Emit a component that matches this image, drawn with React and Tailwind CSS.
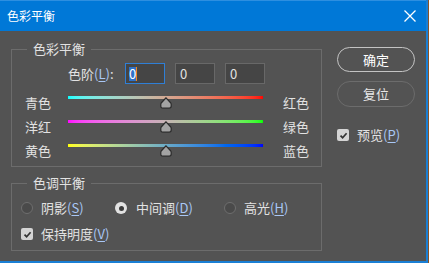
import React from "react";

const font = { fontFamily: '"Noto Sans CJK SC", "Noto Sans", sans-serif' };

function Key({ k }) {
  return (
    <span className="text-[#a9c7f5]">
      (<span className="underline underline-offset-2">{k}</span>)
    </span>
  );
}

function Slider({ left, right, from, to }) {
  return (
    <div className="flex items-center h-[24px]">
      <div className="w-[43px] pl-[13px] box-content">{left}</div>
      <div className="relative w-[195px] h-[13px] -mt-[2px]">
        <div className={`h-[3px] w-full bg-gradient-to-r ${from} ${to}`}></div>
        <svg className="absolute left-[92px] top-[1px]" width="12" height="12" viewBox="0 0 12 12">
          <path d="M6 0.8 L10.8 6 Q11.2 6.5 11.2 7.5 L11.2 9 Q11.2 11.2 9 11.2 L3 11.2 Q0.8 11.2 0.8 9 L0.8 7.5 Q0.8 6.5 1.2 6 Z" fill="#a3a3a3" stroke="#2b2b2b" strokeWidth="1.2" />
        </svg>
      </div>
      <div className="ml-[20px]">{right}</div>
    </div>
  );
}

function Radio({ checked }) {
  return checked ? (
    <span className="w-[12px] h-[12px] rounded-full bg-[#e2e2e2] flex items-center justify-center shrink-0">
      <span className="w-[5px] h-[5px] rounded-full bg-[#3a3a3a]"></span>
    </span>
  ) : (
    <span className="w-[12px] h-[12px] rounded-full bg-[#4a4a4a] border border-[#6e6e6e] shrink-0"></span>
  );
}

function Check() {
  return (
    <span className="w-[12px] h-[12px] rounded-[2px] bg-[#d4d4d4] flex items-center justify-center shrink-0">
      <svg width="9" height="9" viewBox="0 0 9 9">
        <path d="M1.5 4.6 L3.6 6.7 L7.6 2.2" fill="none" stroke="#333" strokeWidth="1.7" />
      </svg>
    </span>
  );
}

export default function App() {
  return (
    <div className="w-[429px] h-[263px] bg-[#8a5326] overflow-hidden" style={font}>
      <div className="w-[428px] h-[263px] bg-[#535353] border-r-2 border-b-2 border-[#1a7fd4] text-[13px] text-[#e2e2e2] leading-[18px]">
        <div className="h-[31px] bg-[#0078d7] border-t border-[#2d8fe0] flex items-center justify-between pl-[7px] pr-[10px]">
          <span className="text-[12px] text-white">色彩平衡</span>
          <svg width="12" height="12" viewBox="0 0 12 12">
            <path d="M0.5 0.5 L11.5 11.5 M11.5 0.5 L0.5 11.5" stroke="white" strokeWidth="1.3" />
          </svg>
        </div>

        <div className="flex items-start">
          <div className="pl-[11px] pt-[9px] w-[322px] shrink-0">
            <fieldset className="border border-[#6c6c6c] w-[311px] pb-[3px]">
              <legend className="ml-[15px] px-[6px]">色彩平衡</legend>
              <div className="flex items-center mt-[5px] pl-[56px]">
                <div className="w-[57px] shrink-0">
                  色阶<Key k="L" />:
                </div>
                <div className="w-[40px] h-[21px] bg-[#454545] border border-[#2f7fd6] flex items-center pl-[3px]">
                  <span className="bg-[#2f72c9] text-white leading-[14px]">0</span>
                  <span className="w-[1px] h-[14px] bg-[#f08a24]"></span>
                </div>
                <div className="w-[40px] h-[21px] bg-[#454545] border border-[#686868] flex items-center pl-[4px] ml-[10px]">0</div>
                <div className="w-[40px] h-[21px] bg-[#454545] border border-[#686868] flex items-center pl-[4px] ml-[10px]">0</div>
              </div>
              <div className="mt-[7px]">
                <Slider left="青色" right="红色" from="from-[#00ffff]" to="to-[#ff0000]" />
                <Slider left="洋红" right="绿色" from="from-[#ff00ff]" to="to-[#00ff00]" />
                <Slider left="黄色" right="蓝色" from="from-[#ffff00]" to="to-[#0000ff]" />
              </div>
            </fieldset>

            <fieldset className="border border-[#6c6c6c] w-[311px] mt-[7px] pb-[6px]">
              <legend className="ml-[15px] px-[6px]">色调平衡</legend>
              <div className="flex items-center h-[20px] mt-[6px] pl-[9px]">
                <div className="w-[94px] flex items-center gap-[8px]">
                  <Radio />
                  <span>阴影<Key k="S" /></span>
                </div>
                <div className="w-[109px] flex items-center gap-[9px]">
                  <Radio checked />
                  <span>中间调<Key k="D" /></span>
                </div>
                <div className="flex items-center gap-[8px]">
                  <Radio />
                  <span>高光<Key k="H" /></span>
                </div>
              </div>
              <div className="flex items-center h-[20px] mt-[6px] pl-[9px] gap-[8px]">
                <Check />
                <span>保持明度<Key k="V" /></span>
              </div>
            </fieldset>
          </div>

          <div className="ml-[15px] pt-[16px] flex flex-col">
            <button className="w-[78px] h-[25px] rounded-full border-[1.5px] border-[#c4c4c4] text-white text-[13px] flex items-center justify-center">
              确定
            </button>
            <button className="w-[78px] h-[26px] mt-[9px] rounded-full border-[1.5px] border-[#6c6c6c] text-[#e6e6e6] text-[13px] flex items-center justify-center">
              复位
            </button>
            <div className="flex items-center gap-[8px] mt-[19px]">
              <Check />
              <span>预览<Key k="P" /></span>
            </div>
          </div>
        </div>
      </div>
    </div>
  );
}
